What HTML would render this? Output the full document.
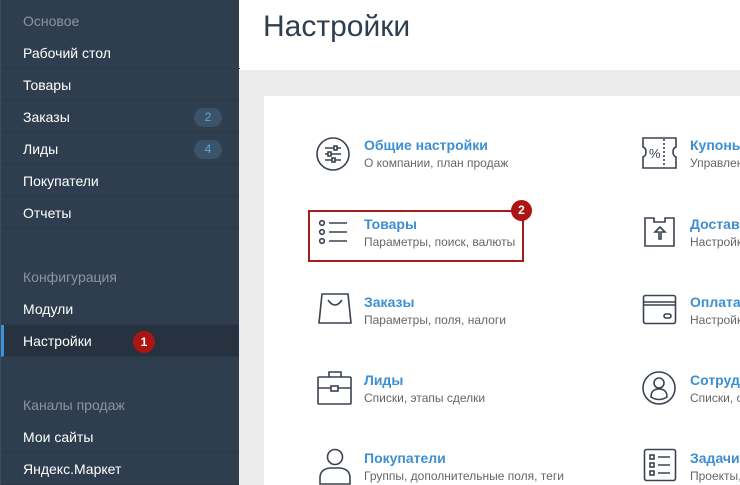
<!DOCTYPE html>
<html><head><meta charset="utf-8"><style>
*{margin:0;padding:0;box-sizing:border-box}
body{width:740px;height:485px;overflow:hidden;position:relative;font-family:"Liberation Sans","Noto Sans CJK SC",sans-serif;background:#fff}
.sb{position:absolute;left:0;top:0;width:239px;height:485px;background:#2f3e4f;border-left:1px solid #3d4c5c}
.h{position:absolute;left:22px;font-size:14px;color:#8a95a1}
.it{position:absolute;left:0;width:239px;height:32px;line-height:32px;padding-left:22px;font-size:14px;color:#fff;border-bottom:1px solid #2a3847}
.bd{position:absolute;right:18px;top:7px;width:28px;height:19px;border-radius:10px;background:#3a5369;color:#5aa6e0;font-size:12px;text-align:center;line-height:19px}
.act{background:#26323f;border-left:3px solid #3d93d8;padding-left:19px}
.main{position:absolute;left:239px;top:70px;width:501px;height:415px;background:#ececec}
.card{position:absolute;left:264px;top:96px;width:476px;height:389px;background:#fff}
.title{position:absolute;left:263px;top:10px;font-size:30px;color:#2f3e4f}
.t{position:absolute;font-size:14px;font-weight:bold;color:#3d8fd1;white-space:nowrap}
.s{position:absolute;font-size:12px;color:#666;white-space:nowrap}
svg{position:absolute}
.red{position:absolute;border-radius:50%;background:#ad1515;color:#fff;font-weight:bold;font-size:12px;text-align:center}
</style></head><body>
<div class="sb">
<div class="h" style="top:13px">Основое</div>
<div class="it" style="top:37px">Рабочий стол</div>
<div class="it" style="top:69px">Товары</div>
<div class="it" style="top:101px">Заказы<span class="bd">2</span></div>
<div class="it" style="top:133px">Лиды<span class="bd">4</span></div>
<div class="it" style="top:165px">Покупатели</div>
<div class="it" style="top:197px">Отчеты</div>
<div class="h" style="top:269px">Конфигурация</div>
<div class="it" style="top:293px">Модули</div>
<div class="it act" style="top:325px">Настройки</div>
<div class="h" style="top:397px">Каналы продаж</div>
<div class="it" style="top:421px">Мои сайты</div>
<div class="it" style="top:453px">Яндекс.Маркет</div>
<div class="red" style="left:132px;top:331px;width:22px;height:22px;line-height:22px">1</div>
</div>
<div class="title">Настройки</div>
<div class="main"></div>
<div class="card"></div>

<svg style="left:316px;top:137px" width="36" height="36" fill="none" stroke="#3a4350" stroke-width="1.6"><circle cx="17" cy="17" r="16"/><path d="M9 11h16M9 17h16M9 23h16"/><rect x="18" y="9" width="3" height="4" fill="#fff"/><rect x="12" y="15" width="3" height="4" fill="#fff"/><rect x="16" y="21" width="3" height="4" fill="#fff"/></svg>
<div class="t" style="left:364px;top:137px">Общие настройки</div>
<div class="s" style="left:364px;top:156px">О компании, план продаж</div>

<div style="position:absolute;left:308px;top:210px;width:216px;height:52px;border:2px solid #a31d1d"></div>
<svg style="left:318px;top:218px" width="34" height="30" fill="none" stroke="#3a4350" stroke-width="1.6"><circle cx="4" cy="5" r="2.3"/><circle cx="4" cy="14" r="2.3"/><circle cx="4" cy="23" r="2.3"/><path d="M11 5h18M11 14h18M11 23h18"/></svg>
<div class="t" style="left:364px;top:216px">Товары</div>
<div class="s" style="left:364px;top:235px">Параметры, поиск, валюты</div>
<div class="red" style="left:511px;top:200px;width:21px;height:21px;line-height:21px">2</div>

<svg style="left:318px;top:292px" width="34" height="34" fill="none" stroke="#3a4350" stroke-width="1.6"><path d="M4 2h26l3 29H1z"/><path d="M10 8q7 10 14 0"/></svg>
<div class="t" style="left:364px;top:294px">Заказы</div>
<div class="s" style="left:364px;top:313px">Параметры, поля, налоги</div>

<svg style="left:316px;top:370px" width="38" height="36" fill="none" stroke="#3a4350" stroke-width="1.6"><path d="M13 7V2h12v5"/><rect x="2" y="7" width="33" height="27" rx="1"/><path d="M2 18h33"/><rect x="15" y="16" width="7" height="5" fill="#fff"/></svg>
<div class="t" style="left:364px;top:372px">Лиды</div>
<div class="s" style="left:364px;top:391px">Списки, этапы сделки</div>

<svg style="left:318px;top:448px" width="34" height="37" fill="none" stroke="#3a4350" stroke-width="1.6"><circle cx="17" cy="9" r="7.5"/><path d="M2 36v-6q0-9 10-10h10q10 1 10 10v6z"/></svg>
<div class="t" style="left:364px;top:450px">Покупатели</div>
<div class="s" style="left:364px;top:469px">Группы, дополнительные поля, теги</div>

<svg style="left:641px;top:136px" width="38" height="34" fill="none" stroke="#3a4350" stroke-width="1.6"><path d="M2 2h33v9q-3 1-3 5t3 5v11H2V21q3-1 3-5t-3-5z"/><path d="M23 3v28" stroke-dasharray="2 2"/><text x="8" y="22" font-size="13" fill="#3a4350" stroke="none" font-family="Liberation Sans">%</text></svg>
<div class="t" style="left:690px;top:137px">Купоны</div>
<div class="s" style="left:690px;top:156px">Управление</div>

<svg style="left:643px;top:216px" width="34" height="32" fill="none" stroke="#3a4350" stroke-width="1.6"><path d="M2 2h9v4h11V2h9v28H2z"/><path d="M16 23v-7h-4l5-5 5 5h-4v7z"/></svg>
<div class="t" style="left:690px;top:216px">Доставка</div>
<div class="s" style="left:690px;top:235px">Настройки</div>

<svg style="left:642px;top:294px" width="36" height="32" fill="none" stroke="#3a4350" stroke-width="1.6"><rect x="1.5" y="1.5" width="32" height="28" rx="2"/><path d="M1.5 8h32M1.5 11h32"/><rect x="22" y="20" width="7" height="4" rx="2"/></svg>
<div class="t" style="left:690px;top:294px">Оплата</div>
<div class="s" style="left:690px;top:313px">Настройки</div>

<svg style="left:641px;top:370px" width="36" height="36" fill="none" stroke="#3a4350" stroke-width="1.6"><circle cx="18" cy="18" r="16"/><circle cx="18" cy="13" r="5"/><path d="M10 27q0-8 8-8q8 0 8 8q-8 5-16 0z"/></svg>
<div class="t" style="left:690px;top:372px">Сотрудники</div>
<div class="s" style="left:690px;top:391px">Списки, о</div>

<svg style="left:643px;top:448px" width="34" height="34" fill="none" stroke="#3a4350" stroke-width="1.6"><rect x="1.5" y="1.5" width="31" height="31" rx="2"/><rect x="7" y="7" width="4" height="4"/><rect x="7" y="15" width="4" height="4"/><rect x="7" y="23" width="4" height="4"/><path d="M15 9h12M15 17h12M15 25h12"/></svg>
<div class="t" style="left:690px;top:450px">Задачи</div>
<div class="s" style="left:690px;top:469px">Проекты,</div>
</body></html>
